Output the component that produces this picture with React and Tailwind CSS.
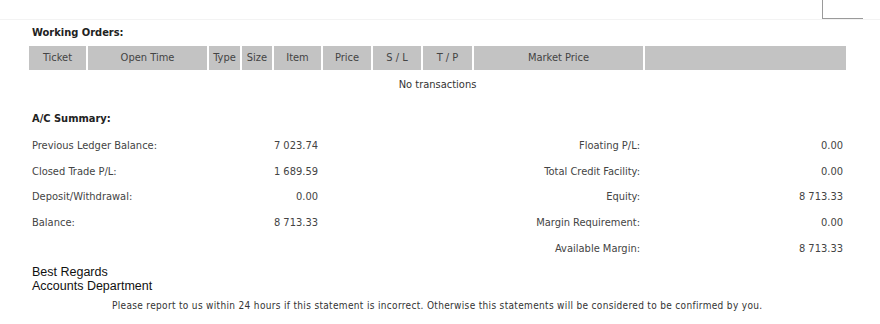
import React from "react";

const cols = [
  ["Ticket", "w-[57px]"],
  ["Open Time", "w-[119px]"],
  ["Type", "w-[31px]"],
  ["Size", "w-[30px]"],
  ["Item", "w-[47px]"],
  ["Price", "w-[48px]"],
  ["S / L", "w-[48px]"],
  ["T / P", "w-[49px]"],
  ["Market Price", "w-[169px]"],
  ["", "w-[201px]"],
];

const rows = [
  ["Previous Ledger Balance:", "7 023.74", "Floating P/L:", "0.00"],
  ["Closed Trade P/L:", "1 689.59", "Total Credit Facility:", "0.00"],
  ["Deposit/Withdrawal:", "0.00", "Equity:", "8 713.33"],
  ["Balance:", "8 713.33", "Margin Requirement:", "0.00"],
  ["", "", "Available Margin:", "8 713.33"],
];

export default function App() {
  const tah = { fontFamily: '"DejaVu Sans Condensed", "DejaVu Sans", sans-serif', fontStretch: "condensed" };
  return (
    <div className="w-[880px] h-[324px] bg-white overflow-hidden text-[#333]" style={tah}>
      <div className="h-[20px] border-b border-[#f3f3f3] flex justify-end pr-[17px]">
        <div className="w-[41px] h-[19px] border-l border-b border-[#9a9a9a]" />
      </div>
      <div className="pl-[32px] pt-[6px] h-[26px] text-[11px] font-bold text-[#222] leading-[14px]">Working Orders:</div>
      <div className="ml-[29px] flex gap-[2px] h-[24px]">
        {cols.map(([t, w], i) => (
          <div key={i} className={`${w} bg-[#c3c3c3] flex items-center justify-center text-[11px] text-[#444]`}>{t}</div>
        ))}
      </div>
      <div className="ml-[29px] w-[817px] h-[30px] flex items-center justify-center text-[11px] text-[#333]">No transactions</div>
      <div className="pl-[32px] pt-[12px] h-[33px] text-[11px] font-bold text-[#222] leading-[14px]">A/C Summary:</div>
      <div className="ml-[32px]">
        {rows.map((r, i) => (
          <div key={i} className="flex h-[25.9px] items-center text-[11px] text-[#444]">
            <div className="w-[200px]">{r[0]}</div>
            <div className="w-[86px] text-right">{r[1]}</div>
            <div className="w-[322px] text-right">{r[2]}</div>
            <div className="w-[203px] text-right">{r[3]}</div>
          </div>
        ))}
      </div>
      <div className="pl-[32px] pt-[3px] text-[12.5px] leading-[14px] text-[#111]" style={{ fontFamily: '"Liberation Sans", Arial, sans-serif' }}>
        <div>Best Regards</div>
        <div>Accounts Department</div>
      </div>
      <div className="pl-[112px] pt-[7px] text-[10px] leading-[12px] tracking-[0.33px] text-[#333]">
        Please report to us within 24 hours if this statement is incorrect. Otherwise this statements will be considered to be confirmed by you.
      </div>
    </div>
  );
}
